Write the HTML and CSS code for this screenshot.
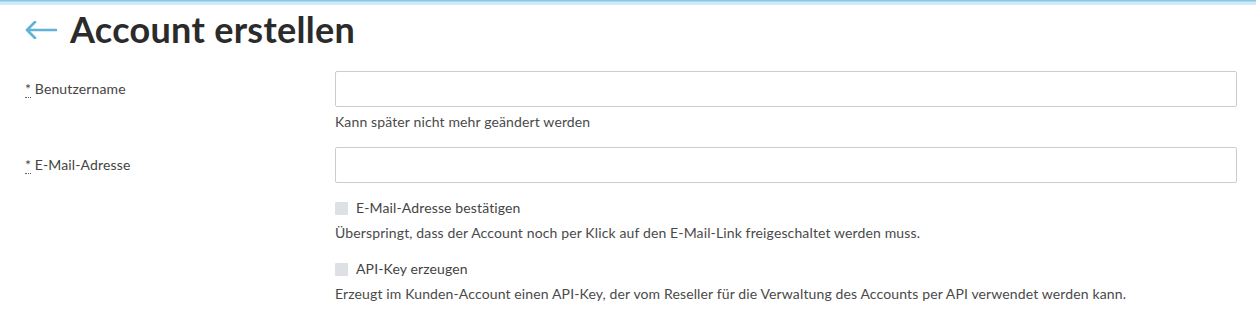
FILE: index.html
```html
<!DOCTYPE html>
<html lang="de">
<head>
    <meta charset="UTF-8">
    <title>Account erstellen</title>
    <link rel="stylesheet" href="styles.css">
</head>
<body>
    <div class="top-bar"></div>
    <div class="page">
        <h1 class="page-title">
            <a href="#" class="back-link">
                <svg width="32" height="18" viewBox="0 0 32 18"><path d="M31 9H2M10 1L2 9l8 8" fill="none" stroke="#62b1d9" stroke-width="2.6" stroke-linecap="round" stroke-linejoin="round"/></svg>
            </a>
            Account erstellen
        </h1>
        <form class="account-form">
            <div class="form-row">
                <label class="form-label" for="username"><abbr title="Pflichtfeld">*</abbr> Benutzername</label>
                <div class="form-field">
                    <input type="text" id="username" class="text-input">
                    <p class="help-text help-first">Kann später nicht mehr geändert werden</p>
                </div>
            </div>
            <div class="form-row">
                <label class="form-label" for="email"><abbr title="Pflichtfeld">*</abbr> E-Mail-Adresse</label>
                <div class="form-field">
                    <input type="email" id="email" class="text-input">
                    <label class="check-line"><span class="check-box"></span>E-Mail-Adresse bestätigen</label>
                    <p class="help-text">Überspringt, dass der Account noch per Klick auf den E-Mail-Link freigeschaltet werden muss.</p>
                    <label class="check-line check-second"><span class="check-box"></span>API-Key erzeugen</label>
                    <p class="help-text">Erzeugt im Kunden-Account einen API-Key, der vom Reseller für die Verwaltung des Accounts per API verwendet werden kann.</p>
                </div>
            </div>
        </form>
    </div>
</body>
</html>
```

FILE: styles.css
```css
* {
    margin: 0;
    padding: 0;
    box-sizing: border-box;
}

body {
    background: #ffffff;
    font-family: Lato, "Open Sans", sans-serif;
    color: #444444;
    font-size: 14px;
    letter-spacing: 0.13px;
}

/* Leiste oben */
.top-bar {
    height: 5px;
    background: linear-gradient(to bottom, #86c8ea 0, #86c8ea 1px, #d3eaf6 2px, #d3eaf6 100%);
}

.page {
    padding: 4px 19px 0 25px;
}

.page-title {
    display: flex;
    align-items: center;
    font-size: 36px;
    letter-spacing: 0.3px;
    line-height: 40px;
    font-weight: 700;
    color: #2b2b2b;
}

.back-link {
    display: flex;
    margin-right: 13px;
    margin-top: 1px;
}

.account-form {
    margin-top: 22px;
}

.form-row {
    display: flex;
    margin-bottom: 16px;
}

.form-label {
    width: 310px;
    flex-shrink: 0;
    line-height: 36px;
    color: #444444;
}

.form-label abbr {
    text-decoration: none;
    border-bottom: 1px dotted #666666;
    line-height: 1;
}

.form-field {
    flex: 1;
}

.text-input {
    display: block;
    width: 100%;
    height: 36px;
    border: 1px solid #cccccc;
    border-radius: 2px;
    background: #ffffff;
}

.help-text {
    line-height: 18px;
    margin-top: 7px;
    color: #4a4a4a;
}

.help-first {
    margin-top: 6px;
}

.check-line {
    display: flex;
    align-items: center;
    line-height: 18px;
    margin-top: 16px;
}

.check-second {
    margin-top: 18px;
}

.check-box {
    width: 13px;
    height: 13px;
    background: #dde1e6;
    border-radius: 1px;
    margin-right: 8px;
}
```
